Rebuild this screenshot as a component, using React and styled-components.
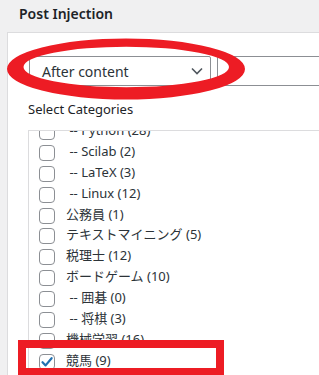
import React from "react";
import styled, { createGlobalStyle } from "styled-components";

const GlobalStyle = createGlobalStyle`
  html, body { margin: 0; padding: 0; background: #f0f0f1; overflow: hidden; }
  body { font-family: "Noto Sans", "Noto Sans CJK JP", sans-serif; color: #2c3338; }
`;

const Page = styled.div`
  position: relative;
  width: 319px;
  height: 375px;
  overflow: hidden;
  background: #f0f0f1;
`;

const Header = styled.div`
  height: 32px;
  box-sizing: border-box;
  padding: 4px 0 0 19px;
`;

const Title = styled.h2`
  margin: 0;
  font-size: 14px;
  line-height: 20px;
  font-weight: 600;
  color: #1d2327;
`;

const Panel = styled.div`
  margin-left: 7px;
  width: 400px;
  height: 343px;
  box-sizing: border-box;
  background: #fff;
  border-top: 1px solid #dcdcde;
  border-left: 1px solid #dcdcde;
  padding: 23px 0 0 20px;
`;

const Controls = styled.div`
  display: flex;
  gap: 6px;
  margin-left: 1px;
`;

const SelectBox = styled.div`
  width: 191px;
  height: 30px;
  box-sizing: border-box;
  border: 1px solid #8c8f94;
  border-radius: 2px;
  display: flex;
  align-items: center;
  justify-content: space-between;
  padding: 0 7px 0 12px;
  font-size: 14px;
  color: #2c3338;
`;

const TextInput = styled.div`
  width: 200px;
  height: 30px;
  box-sizing: border-box;
  border: 1px solid #8c8f94;
  border-radius: 2px;
  display: flex;
  align-items: center;
  padding-left: 11px;
  font-size: 14px;
  color: #2c3338;
`;

const Label = styled.div`
  margin-top: 13px;
  font-size: 13px;
  line-height: 20px;
  color: #1d2327;
`;

const ListBox = styled.div`
  margin-top: 11px;
  width: 300px;
  height: 260px;
  box-sizing: border-box;
  border: 1px solid #dcdcde;
  padding: 0 10px;
  overflow: hidden;
`;

const List = styled.ul`
  list-style: none;
  margin: -11px 0 0 0;
  padding: 0;
`;

const Item = styled.li`
  display: flex;
  align-items: flex-start;
  height: 20.9px;
  font-size: 13px;
  line-height: 20.9px;
  white-space: nowrap;
  color: #2c3338;
`;

const Box = styled.span`
  flex: none;
  width: 16px;
  height: 16px;
  box-sizing: border-box;
  margin: 4px 11px 0 0;
  border: 1px solid #8c8f94;
  border-radius: 4px;
  background: #fff;
  display: flex;
  align-items: center;
  justify-content: center;
`;

const Ellipse = styled.svg`
  position: absolute;
  left: 0;
  top: 0;
  pointer-events: none;
`;

const RedRect = styled.div`
  position: absolute;
  left: 18px;
  top: 340px;
  width: 206px;
  height: 36px;
  box-sizing: border-box;
  border: 8px solid #ed1c24;
  pointer-events: none;
`;

const items = [
  { t: "\u00a0-- Python (28)" },
  { t: "\u00a0-- Scilab (2)" },
  { t: "\u00a0-- LaTeX (3)" },
  { t: "\u00a0-- Linux (12)" },
  { t: "公務員 (1)" },
  { t: "テキストマイニング (5)" },
  { t: "税理士 (12)" },
  { t: "ボードゲーム (10)" },
  { t: "\u00a0-- 囲碁 (0)" },
  { t: "\u00a0-- 将棋 (3)" },
  { t: "機械学習 (16)" },
  { t: "競馬 (9)", checked: true },
];

export default function App() {
  return (
    <Page>
      <GlobalStyle />
      <Header>
        <Title>Post Injection</Title>
      </Header>
      <Panel>
        <Controls>
          <SelectBox>
            <span>After content</span>
            <svg width="12" height="8" viewBox="0 0 12 8">
              <polyline points="1,1.5 6,6.5 11,1.5" fill="none" stroke="#50575e" strokeWidth="1.6" />
            </svg>
          </SelectBox>
          <TextInput>1.</TextInput>
        </Controls>
        <Label>Select Categories</Label>
        <ListBox>
          <List>
            {items.map((it, i) => (
              <Item key={i}>
                <Box>
                  {it.checked && (
                    <svg width="14" height="14" viewBox="0 0 14 14">
                      <path d="M2.5 7.2 L5.6 10.4 L11.6 3.2" fill="none" stroke="#2271b1" strokeWidth="2.2" strokeLinecap="round" strokeLinejoin="round" />
                    </svg>
                  )}
                </Box>
                <span>{it.t}</span>
              </Item>
            ))}
          </List>
        </ListBox>
      </Panel>
      <Ellipse width="319" height="375" viewBox="0 0 319 375">
        <path
          fillRule="evenodd"
          fill="#ed1c24"
          d="M7 69 A119 30.5 0 1 0 245 69 A119 30.5 0 1 0 7 69 Z M23.5 67 A102.75 20.2 0 1 0 229 67 A102.75 20.2 0 1 0 23.5 67 Z"
        />
      </Ellipse>
      <RedRect />
    </Page>
  );
}
